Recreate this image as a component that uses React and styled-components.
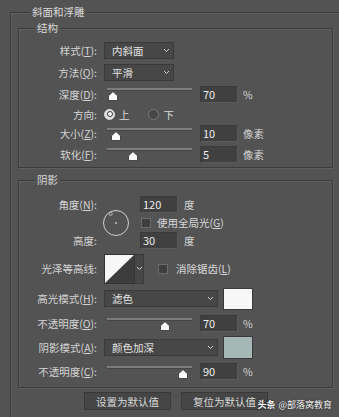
import styled, { createGlobalStyle } from "styled-components";

const GlobalStyle = createGlobalStyle`
  html, body {
    margin: 0;
    padding: 0;
    background: #535353;
    overflow: hidden;
  }
  body {
    font-family: "Noto Sans CJK SC", "Noto Sans", sans-serif;
    font-size: 10.5px;
    color: #d6d6d6;
  }
`;

const Page = styled.div`
  position: relative;
  width: 339px;
  height: 417px;
  overflow: hidden;
  padding-top: 5px;
  box-sizing: border-box;
`;

const Group = styled.fieldset`
  margin: ${(p) => p.$mt || 0}px 0 0 ${(p) => p.$ml || 0}px;
  min-inline-size: 0;
  box-sizing: border-box;
  border: 1px solid #3d3d3d;
  box-shadow: inset 1px 1px 0 #5f5f5f, 1px 1px 0 #5f5f5f;
  padding: ${(p) => p.$pad};
  ${(p) => p.$w && `width: ${p.$w}px;`}
`;

const Legend = styled.legend`
  margin-left: ${(p) => p.$indent}px;
  padding: 0 2px;
  height: 14px;
  line-height: 14px;
  background: #535353;
  color: #dadada;
`;

const Row = styled.div`
  display: flex;
  align-items: center;
  height: ${(p) => p.$h}px;
`;

const Label = styled.div`
  width: 78px;
  margin-right: 7px;
  flex-shrink: 0;
  text-align: right;
  white-space: nowrap;
  color: #d4d4d4;
`;

const U = styled.span`
  text-decoration: underline;
  text-underline-offset: 1px;
`;

const Select = styled.div`
  width: ${(p) => p.$w}px;
  height: 17px;
  box-sizing: border-box;
  display: flex;
  align-items: center;
  justify-content: space-between;
  padding: 0 3px 0 7px;
  background: #474747;
  border: 1px solid #3a3a3a;
  color: #e2e2e2;
  flex-shrink: 0;
`;

const NumBox = styled.div`
  width: 38px;
  height: 17px;
  box-sizing: border-box;
  margin-left: ${(p) => p.$ml ?? 4}px;
  padding-left: 2px;
  background: #404040;
  border: 1px solid #5a5a5a;
  border-top-color: #3a3a3a;
  border-left-color: #3a3a3a;
  color: #ececec;
  font-size: 11px;
  line-height: 15px;
  flex-shrink: 0;
`;

const Unit = styled.span`
  margin-left: ${(p) => p.$ml ?? 5}px;
  color: #d4d4d4;
`;

const SliderBox = styled.div`
  position: relative;
  width: 92px;
  height: 16px;
  flex-shrink: 0;
`;

const Track = styled.div`
  position: absolute;
  left: 3px;
  right: 4px;
  top: 2px;
  height: 2px;
  background: #7c7c7c;
  border-bottom: 1px solid #464646;
`;

const Thumb = styled.svg`
  position: absolute;
  top: 5px;
  width: 10px;
  height: 10px;
`;

const RadioDot = styled.span`
  position: relative;
  width: 11px;
  height: 11px;
  border-radius: 50%;
  box-sizing: border-box;
  flex-shrink: 0;
  margin-left: ${(p) => p.$ml || 0}px;
  background: ${(p) => (p.$on ? "#dedede" : "#474747")};
  border: 1px solid ${(p) => (p.$on ? "#dedede" : "#7a7a7a")};
  &::after {
    content: "";
    display: ${(p) => (p.$on ? "block" : "none")};
    position: absolute;
    inset: 1.5px;
    border-radius: 50%;
    background: #f4f4f4;
    border: 1.5px solid #3a3a3a;
  }
`;

const Opt = styled.span`
  margin-left: ${(p) => p.$ml}px;
  color: #d8d8d8;
`;

const Check = styled.span`
  width: 10px;
  height: 10px;
  box-sizing: border-box;
  background: #3e3e3e;
  border: 1px solid #6c6c6c;
  flex-shrink: 0;
  margin-left: ${(p) => p.$ml || 0}px;
`;

const AngleGrid = styled.div`
  display: grid;
  grid-template-columns: 85px 36px auto;
  grid-template-rows: 23px 13px 23px;
  align-items: center;
`;

const GridLabel = styled(Label)`
  grid-column: 1;
  grid-row: ${(p) => p.$row};
`;

const Dial = styled.svg`
  grid-column: 2;
  grid-row: 1 / span 3;
  width: 30px;
  height: 30px;
  margin-left: -3px;
`;

const Cell = styled.div`
  grid-column: 3;
  grid-row: ${(p) => p.$row};
  display: flex;
  align-items: center;
`;

const Contour = styled.div`
  display: flex;
  height: 30px;
  flex-shrink: 0;
`;

const ContourPic = styled.svg`
  width: 31px;
  height: 30px;
  display: block;
`;

const ContourArrow = styled.div`
  width: 9px;
  height: 30px;
  box-sizing: border-box;
  display: flex;
  align-items: center;
  justify-content: center;
  background: #474747;
  border: 1px solid #3a3a3a;
  border-left: none;
`;

const Swatch = styled.div`
  width: 30px;
  height: ${(p) => p.$h}px;
  box-sizing: border-box;
  margin-left: 5px;
  background: ${(p) => p.$color};
  border: 1px solid #3a3a3a;
  flex-shrink: 0;
`;

const Buttons = styled.div`
  display: flex;
  justify-content: center;
  gap: 10px;
  margin-top: 4px;
  padding-left: 1px;
`;

const Button = styled.button`
  width: 87px;
  height: 18px;
  padding: 0;
  font: inherit;
  color: #d8d8d8;
  background: #464646;
  border: 1px solid #393939;
`;

const Watermark = styled.div`
  position: absolute;
  right: 7px;
  bottom: 6px;
  font-size: 9px;
  line-height: 12px;
  color: #f4f4f4;
  text-shadow: 0 0 2px #222;
  b {
    font-weight: 700;
    margin-right: 3px;
  }
`;

const Chevron = () => (
  <svg width="7" height="5" viewBox="0 0 7 5">
    <polyline points="1,1 3.5,3.5 6,1" fill="none" stroke="#cfcfcf" strokeWidth="1" />
  </svg>
);

const Slider = ({ pos }) => (
  <SliderBox>
    <Track />
    <Thumb viewBox="0 0 10 10" style={{ left: 3 + pos * 85 - 5 }}>
      <path d="M0.5 9.5 V4.8 L5 0.6 L9.5 4.8 V9.5 Z" fill="#fafafa" stroke="#2e2e2e" strokeWidth="0.8" />
    </Thumb>
  </SliderBox>
);

const SliderRow = ({ h, label, pos, value, unit }) => (
  <Row $h={h}>
    <Label>{label}</Label>
    <Slider pos={pos} />
    <NumBox>{value}</NumBox>
    <Unit>{unit}</Unit>
  </Row>
);

export default function App() {
  return (
    <Page>
      <GlobalStyle />
      <Group $ml={10} $w={340} $pad="2px 16px 20px 7px">
        <Legend $indent={12}>斜面和浮雕</Legend>

        <Group $pad="4px 0 3px 0">
          <Legend $indent={16}>结构</Legend>
          <Row $h={22}>
            <Label>样式(<U>T</U>):</Label>
            <Select $w={70}>
              内斜面
              <Chevron />
            </Select>
          </Row>
          <Row $h={22}>
            <Label>方法(<U>Q</U>):</Label>
            <Select $w={70}>
              平滑
              <Chevron />
            </Select>
          </Row>
          <SliderRow h={22} label={<>深度(<U>D</U>):</>} pos={0.07} value="70" unit="%" />
          <Row $h={18}>
            <Label>方向:</Label>
            <RadioDot $on />
            <Opt $ml={4}>上</Opt>
            <RadioDot $ml={18} />
            <Opt $ml={5}>下</Opt>
          </Row>
          <SliderRow h={21} label={<>大小(<U>Z</U>):</>} pos={0.1} value="10" unit="像素" />
          <SliderRow h={20} label={<>软化(<U>F</U>):</>} pos={0.305} value="5" unit="像素" />
        </Group>

        <Group $mt={5} $pad="6px 0 4px 0">
          <Legend $indent={16}>阴影</Legend>
          <AngleGrid>
            <GridLabel $row={1}>角度(<U>N</U>):</GridLabel>
            <GridLabel $row={3}>高度:</GridLabel>
            <Dial viewBox="0 0 30 30">
              <circle cx="15" cy="15" r="12.5" fill="none" stroke="#d0d0d0" strokeWidth="1" />
              <circle cx="9.6" cy="5.8" r="1.6" fill="none" stroke="#d0d0d0" strokeWidth="0.8" />
              <circle cx="15" cy="15" r="0.9" fill="#d0d0d0" />
            </Dial>
            <Cell $row={1}>
              <NumBox $ml={0}>120</NumBox>
              <Unit $ml={6}>度</Unit>
            </Cell>
            <Cell $row={2}>
              <Check $ml={1} />
              <Opt $ml={6}>
                使用全局光(<U>G</U>)
              </Opt>
            </Cell>
            <Cell $row={3}>
              <NumBox $ml={0}>30</NumBox>
              <Unit $ml={6}>度</Unit>
            </Cell>
          </AngleGrid>

          <Row $h={33}>
            <Label>光泽等高线:</Label>
            <Contour>
              <ContourPic viewBox="0 0 31 30">
                <rect x="0" y="0" width="31" height="30" fill="#3c3c3c" />
                <polygon points="0,30 31,0 0,0" fill="#f7f7f7" />
                <rect x="0.5" y="0.5" width="30" height="29" fill="none" stroke="#333" strokeWidth="1" />
              </ContourPic>
              <ContourArrow>
                <Chevron />
              </ContourArrow>
            </Contour>
            <Check $ml={14} />
            <Opt $ml={8}>
              消除锯齿(<U>L</U>)
            </Opt>
          </Row>

          <Row $h={27}>
            <Label>高光模式(<U>H</U>):</Label>
            <Select $w={114}>
              滤色
              <Chevron />
            </Select>
            <Swatch $color="#f7f7f7" $h={22} />
          </Row>
          <SliderRow h={23} label={<>不透明度(<U>O</U>):</>} pos={0.68} value="70" unit="%" />
          <Row $h={25}>
            <Label>阴影模式(<U>A</U>):</Label>
            <Select $w={114}>
              颜色加深
              <Chevron />
            </Select>
            <Swatch $color="#a6b8b6" $h={23} />
          </Row>
          <SliderRow h={23} label={<>不透明度(<U>C</U>):</>} pos={0.89} value="90" unit="%" />
        </Group>

        <Buttons>
          <Button>设置为默认值</Button>
          <Button>复位为默认值</Button>
        </Buttons>
      </Group>

      <Watermark>
        <b>头条</b>@部落窝教育
      </Watermark>
    </Page>
  );
}
